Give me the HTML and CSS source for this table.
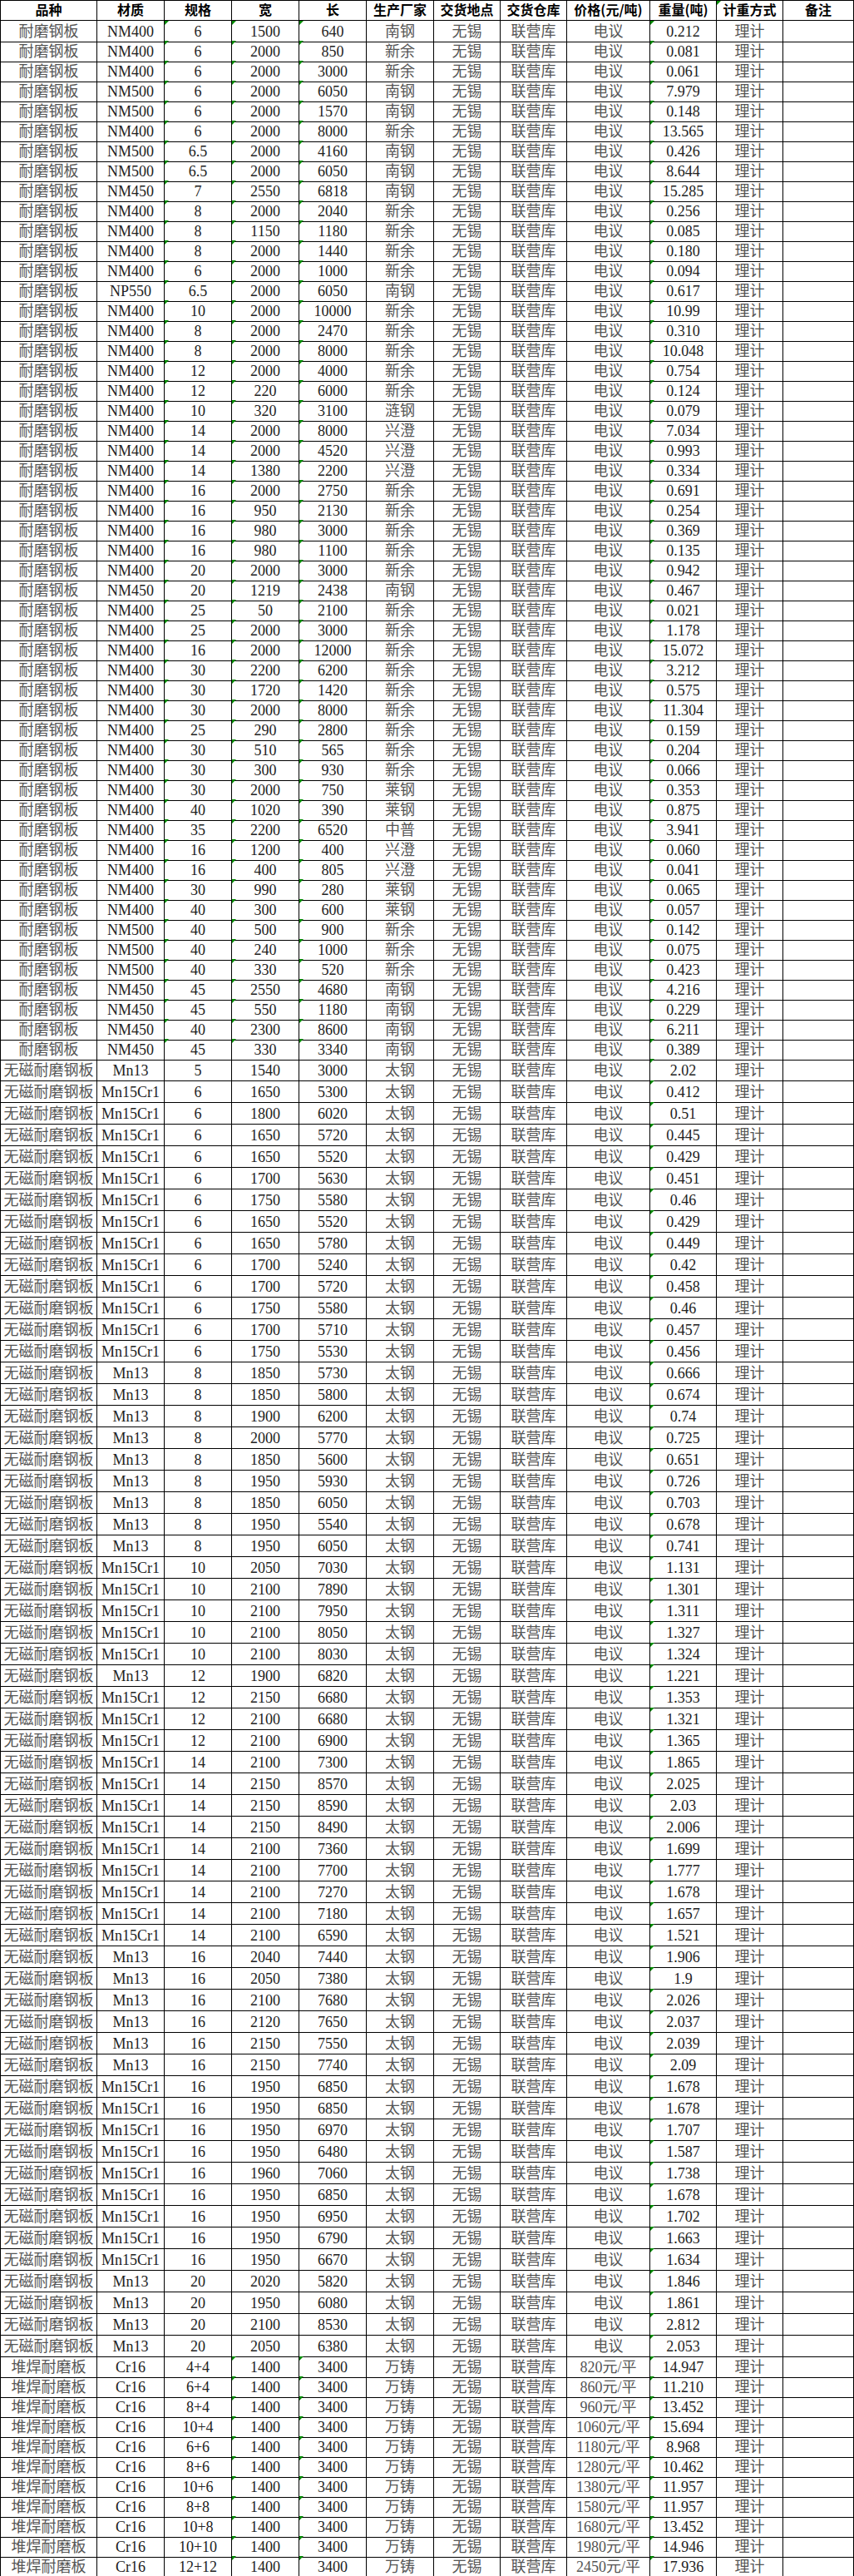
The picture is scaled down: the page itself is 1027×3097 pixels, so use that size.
FILE: index.html
```html
<!DOCTYPE html>
<html lang="zh-CN">
<head>
<meta charset="utf-8">
<title>耐磨钢板库存</title>
<link rel="stylesheet" href="styles.css">
</head>
<body>
<div class="sheet">
  <div class="row head"><span>品种</span><span>材质</span><span>规格</span><span>宽</span><span>长</span><span>生产厂家</span><span>交货地点</span><span>交货仓库</span><span>价格(元/吨)</span><span>重量(吨)</span><span>计重方式</span><span>备注</span></div>
  <div class="group nm">
    <div class="row"><span>耐磨钢板</span><span>NM400</span><span>6</span><span>1500</span><span>640</span><span>南钢</span><span>无锡</span><span>联营库</span><span>电议</span><span>0.212</span><span>理计</span><span></span></div>
    <div class="row"><span>耐磨钢板</span><span>NM400</span><span>6</span><span>2000</span><span>850</span><span>新余</span><span>无锡</span><span>联营库</span><span>电议</span><span>0.081</span><span>理计</span><span></span></div>
    <div class="row"><span>耐磨钢板</span><span>NM400</span><span>6</span><span>2000</span><span>3000</span><span>新余</span><span>无锡</span><span>联营库</span><span>电议</span><span>0.061</span><span>理计</span><span></span></div>
    <div class="row"><span>耐磨钢板</span><span>NM500</span><span>6</span><span>2000</span><span>6050</span><span>南钢</span><span>无锡</span><span>联营库</span><span>电议</span><span>7.979</span><span>理计</span><span></span></div>
    <div class="row"><span>耐磨钢板</span><span>NM500</span><span>6</span><span>2000</span><span>1570</span><span>南钢</span><span>无锡</span><span>联营库</span><span>电议</span><span>0.148</span><span>理计</span><span></span></div>
    <div class="row"><span>耐磨钢板</span><span>NM400</span><span>6</span><span>2000</span><span>8000</span><span>新余</span><span>无锡</span><span>联营库</span><span>电议</span><span>13.565</span><span>理计</span><span></span></div>
    <div class="row"><span>耐磨钢板</span><span>NM500</span><span>6.5</span><span>2000</span><span>4160</span><span>南钢</span><span>无锡</span><span>联营库</span><span>电议</span><span>0.426</span><span>理计</span><span></span></div>
    <div class="row"><span>耐磨钢板</span><span>NM500</span><span>6.5</span><span>2000</span><span>6050</span><span>南钢</span><span>无锡</span><span>联营库</span><span>电议</span><span>8.644</span><span>理计</span><span></span></div>
    <div class="row"><span>耐磨钢板</span><span>NM450</span><span>7</span><span>2550</span><span>6818</span><span>南钢</span><span>无锡</span><span>联营库</span><span>电议</span><span>15.285</span><span>理计</span><span></span></div>
    <div class="row"><span>耐磨钢板</span><span>NM400</span><span>8</span><span>2000</span><span>2040</span><span>新余</span><span>无锡</span><span>联营库</span><span>电议</span><span>0.256</span><span>理计</span><span></span></div>
    <div class="row"><span>耐磨钢板</span><span>NM400</span><span>8</span><span>1150</span><span>1180</span><span>新余</span><span>无锡</span><span>联营库</span><span>电议</span><span>0.085</span><span>理计</span><span></span></div>
    <div class="row"><span>耐磨钢板</span><span>NM400</span><span>8</span><span>2000</span><span>1440</span><span>新余</span><span>无锡</span><span>联营库</span><span>电议</span><span>0.180</span><span>理计</span><span></span></div>
    <div class="row"><span>耐磨钢板</span><span>NM400</span><span>6</span><span>2000</span><span>1000</span><span>新余</span><span>无锡</span><span>联营库</span><span>电议</span><span>0.094</span><span>理计</span><span></span></div>
    <div class="row"><span>耐磨钢板</span><span>NP550</span><span>6.5</span><span>2000</span><span>6050</span><span>南钢</span><span>无锡</span><span>联营库</span><span>电议</span><span>0.617</span><span>理计</span><span></span></div>
    <div class="row"><span>耐磨钢板</span><span>NM400</span><span>10</span><span>2000</span><span>10000</span><span>新余</span><span>无锡</span><span>联营库</span><span>电议</span><span>10.99</span><span>理计</span><span></span></div>
    <div class="row"><span>耐磨钢板</span><span>NM400</span><span>8</span><span>2000</span><span>2470</span><span>新余</span><span>无锡</span><span>联营库</span><span>电议</span><span>0.310</span><span>理计</span><span></span></div>
    <div class="row"><span>耐磨钢板</span><span>NM400</span><span>8</span><span>2000</span><span>8000</span><span>新余</span><span>无锡</span><span>联营库</span><span>电议</span><span>10.048</span><span>理计</span><span></span></div>
    <div class="row"><span>耐磨钢板</span><span>NM400</span><span>12</span><span>2000</span><span>4000</span><span>新余</span><span>无锡</span><span>联营库</span><span>电议</span><span>0.754</span><span>理计</span><span></span></div>
    <div class="row"><span>耐磨钢板</span><span>NM400</span><span>12</span><span>220</span><span>6000</span><span>新余</span><span>无锡</span><span>联营库</span><span>电议</span><span>0.124</span><span>理计</span><span></span></div>
    <div class="row"><span>耐磨钢板</span><span>NM400</span><span>10</span><span>320</span><span>3100</span><span>涟钢</span><span>无锡</span><span>联营库</span><span>电议</span><span>0.079</span><span>理计</span><span></span></div>
    <div class="row"><span>耐磨钢板</span><span>NM400</span><span>14</span><span>2000</span><span>8000</span><span>兴澄</span><span>无锡</span><span>联营库</span><span>电议</span><span>7.034</span><span>理计</span><span></span></div>
    <div class="row"><span>耐磨钢板</span><span>NM400</span><span>14</span><span>2000</span><span>4520</span><span>兴澄</span><span>无锡</span><span>联营库</span><span>电议</span><span>0.993</span><span>理计</span><span></span></div>
    <div class="row"><span>耐磨钢板</span><span>NM400</span><span>14</span><span>1380</span><span>2200</span><span>兴澄</span><span>无锡</span><span>联营库</span><span>电议</span><span>0.334</span><span>理计</span><span></span></div>
    <div class="row"><span>耐磨钢板</span><span>NM400</span><span>16</span><span>2000</span><span>2750</span><span>新余</span><span>无锡</span><span>联营库</span><span>电议</span><span>0.691</span><span>理计</span><span></span></div>
    <div class="row"><span>耐磨钢板</span><span>NM400</span><span>16</span><span>950</span><span>2130</span><span>新余</span><span>无锡</span><span>联营库</span><span>电议</span><span>0.254</span><span>理计</span><span></span></div>
    <div class="row"><span>耐磨钢板</span><span>NM400</span><span>16</span><span>980</span><span>3000</span><span>新余</span><span>无锡</span><span>联营库</span><span>电议</span><span>0.369</span><span>理计</span><span></span></div>
    <div class="row"><span>耐磨钢板</span><span>NM400</span><span>16</span><span>980</span><span>1100</span><span>新余</span><span>无锡</span><span>联营库</span><span>电议</span><span>0.135</span><span>理计</span><span></span></div>
    <div class="row"><span>耐磨钢板</span><span>NM400</span><span>20</span><span>2000</span><span>3000</span><span>新余</span><span>无锡</span><span>联营库</span><span>电议</span><span>0.942</span><span>理计</span><span></span></div>
    <div class="row"><span>耐磨钢板</span><span>NM450</span><span>20</span><span>1219</span><span>2438</span><span>南钢</span><span>无锡</span><span>联营库</span><span>电议</span><span>0.467</span><span>理计</span><span></span></div>
    <div class="row"><span>耐磨钢板</span><span>NM400</span><span>25</span><span>50</span><span>2100</span><span>新余</span><span>无锡</span><span>联营库</span><span>电议</span><span>0.021</span><span>理计</span><span></span></div>
    <div class="row"><span>耐磨钢板</span><span>NM400</span><span>25</span><span>2000</span><span>3000</span><span>新余</span><span>无锡</span><span>联营库</span><span>电议</span><span>1.178</span><span>理计</span><span></span></div>
    <div class="row"><span>耐磨钢板</span><span>NM400</span><span>16</span><span>2000</span><span>12000</span><span>新余</span><span>无锡</span><span>联营库</span><span>电议</span><span>15.072</span><span>理计</span><span></span></div>
    <div class="row"><span>耐磨钢板</span><span>NM400</span><span>30</span><span>2200</span><span>6200</span><span>新余</span><span>无锡</span><span>联营库</span><span>电议</span><span>3.212</span><span>理计</span><span></span></div>
    <div class="row"><span>耐磨钢板</span><span>NM400</span><span>30</span><span>1720</span><span>1420</span><span>新余</span><span>无锡</span><span>联营库</span><span>电议</span><span>0.575</span><span>理计</span><span></span></div>
    <div class="row"><span>耐磨钢板</span><span>NM400</span><span>30</span><span>2000</span><span>8000</span><span>新余</span><span>无锡</span><span>联营库</span><span>电议</span><span>11.304</span><span>理计</span><span></span></div>
    <div class="row"><span>耐磨钢板</span><span>NM400</span><span>25</span><span>290</span><span>2800</span><span>新余</span><span>无锡</span><span>联营库</span><span>电议</span><span>0.159</span><span>理计</span><span></span></div>
    <div class="row"><span>耐磨钢板</span><span>NM400</span><span>30</span><span>510</span><span>565</span><span>新余</span><span>无锡</span><span>联营库</span><span>电议</span><span>0.204</span><span>理计</span><span></span></div>
    <div class="row"><span>耐磨钢板</span><span>NM400</span><span>30</span><span>300</span><span>930</span><span>新余</span><span>无锡</span><span>联营库</span><span>电议</span><span>0.066</span><span>理计</span><span></span></div>
    <div class="row"><span>耐磨钢板</span><span>NM400</span><span>30</span><span>2000</span><span>750</span><span>莱钢</span><span>无锡</span><span>联营库</span><span>电议</span><span>0.353</span><span>理计</span><span></span></div>
    <div class="row"><span>耐磨钢板</span><span>NM400</span><span>40</span><span>1020</span><span>390</span><span>莱钢</span><span>无锡</span><span>联营库</span><span>电议</span><span>0.875</span><span>理计</span><span></span></div>
    <div class="row"><span>耐磨钢板</span><span>NM400</span><span>35</span><span>2200</span><span>6520</span><span>中普</span><span>无锡</span><span>联营库</span><span>电议</span><span>3.941</span><span>理计</span><span></span></div>
    <div class="row"><span>耐磨钢板</span><span>NM400</span><span>16</span><span>1200</span><span>400</span><span>兴澄</span><span>无锡</span><span>联营库</span><span>电议</span><span>0.060</span><span>理计</span><span></span></div>
    <div class="row"><span>耐磨钢板</span><span>NM400</span><span>16</span><span>400</span><span>805</span><span>兴澄</span><span>无锡</span><span>联营库</span><span>电议</span><span>0.041</span><span>理计</span><span></span></div>
    <div class="row"><span>耐磨钢板</span><span>NM400</span><span>30</span><span>990</span><span>280</span><span>莱钢</span><span>无锡</span><span>联营库</span><span>电议</span><span>0.065</span><span>理计</span><span></span></div>
    <div class="row"><span>耐磨钢板</span><span>NM400</span><span>40</span><span>300</span><span>600</span><span>莱钢</span><span>无锡</span><span>联营库</span><span>电议</span><span>0.057</span><span>理计</span><span></span></div>
    <div class="row"><span>耐磨钢板</span><span>NM500</span><span>40</span><span>500</span><span>900</span><span>新余</span><span>无锡</span><span>联营库</span><span>电议</span><span>0.142</span><span>理计</span><span></span></div>
    <div class="row"><span>耐磨钢板</span><span>NM500</span><span>40</span><span>240</span><span>1000</span><span>新余</span><span>无锡</span><span>联营库</span><span>电议</span><span>0.075</span><span>理计</span><span></span></div>
    <div class="row"><span>耐磨钢板</span><span>NM500</span><span>40</span><span>330</span><span>520</span><span>新余</span><span>无锡</span><span>联营库</span><span>电议</span><span>0.423</span><span>理计</span><span></span></div>
    <div class="row"><span>耐磨钢板</span><span>NM450</span><span>45</span><span>2550</span><span>4680</span><span>南钢</span><span>无锡</span><span>联营库</span><span>电议</span><span>4.216</span><span>理计</span><span></span></div>
    <div class="row"><span>耐磨钢板</span><span>NM450</span><span>45</span><span>550</span><span>1180</span><span>南钢</span><span>无锡</span><span>联营库</span><span>电议</span><span>0.229</span><span>理计</span><span></span></div>
    <div class="row"><span>耐磨钢板</span><span>NM450</span><span>40</span><span>2300</span><span>8600</span><span>南钢</span><span>无锡</span><span>联营库</span><span>电议</span><span>6.211</span><span>理计</span><span></span></div>
    <div class="row"><span>耐磨钢板</span><span>NM450</span><span>45</span><span>330</span><span>3340</span><span>南钢</span><span>无锡</span><span>联营库</span><span>电议</span><span>0.389</span><span>理计</span><span></span></div>
  </div>
  <div class="group nonmag">
    <div class="row"><span>无磁耐磨钢板</span><span>Mn13</span><span>5</span><span>1540</span><span>3000</span><span>太钢</span><span>无锡</span><span>联营库</span><span>电议</span><span>2.02</span><span>理计</span><span></span></div>
    <div class="row"><span>无磁耐磨钢板</span><span>Mn15Cr1</span><span>6</span><span>1650</span><span>5300</span><span>太钢</span><span>无锡</span><span>联营库</span><span>电议</span><span>0.412</span><span>理计</span><span></span></div>
    <div class="row"><span>无磁耐磨钢板</span><span>Mn15Cr1</span><span>6</span><span>1800</span><span>6020</span><span>太钢</span><span>无锡</span><span>联营库</span><span>电议</span><span>0.51</span><span>理计</span><span></span></div>
    <div class="row"><span>无磁耐磨钢板</span><span>Mn15Cr1</span><span>6</span><span>1650</span><span>5720</span><span>太钢</span><span>无锡</span><span>联营库</span><span>电议</span><span>0.445</span><span>理计</span><span></span></div>
    <div class="row"><span>无磁耐磨钢板</span><span>Mn15Cr1</span><span>6</span><span>1650</span><span>5520</span><span>太钢</span><span>无锡</span><span>联营库</span><span>电议</span><span>0.429</span><span>理计</span><span></span></div>
    <div class="row"><span>无磁耐磨钢板</span><span>Mn15Cr1</span><span>6</span><span>1700</span><span>5630</span><span>太钢</span><span>无锡</span><span>联营库</span><span>电议</span><span>0.451</span><span>理计</span><span></span></div>
    <div class="row"><span>无磁耐磨钢板</span><span>Mn15Cr1</span><span>6</span><span>1750</span><span>5580</span><span>太钢</span><span>无锡</span><span>联营库</span><span>电议</span><span>0.46</span><span>理计</span><span></span></div>
    <div class="row"><span>无磁耐磨钢板</span><span>Mn15Cr1</span><span>6</span><span>1650</span><span>5520</span><span>太钢</span><span>无锡</span><span>联营库</span><span>电议</span><span>0.429</span><span>理计</span><span></span></div>
    <div class="row"><span>无磁耐磨钢板</span><span>Mn15Cr1</span><span>6</span><span>1650</span><span>5780</span><span>太钢</span><span>无锡</span><span>联营库</span><span>电议</span><span>0.449</span><span>理计</span><span></span></div>
    <div class="row"><span>无磁耐磨钢板</span><span>Mn15Cr1</span><span>6</span><span>1700</span><span>5240</span><span>太钢</span><span>无锡</span><span>联营库</span><span>电议</span><span>0.42</span><span>理计</span><span></span></div>
    <div class="row"><span>无磁耐磨钢板</span><span>Mn15Cr1</span><span>6</span><span>1700</span><span>5720</span><span>太钢</span><span>无锡</span><span>联营库</span><span>电议</span><span>0.458</span><span>理计</span><span></span></div>
    <div class="row"><span>无磁耐磨钢板</span><span>Mn15Cr1</span><span>6</span><span>1750</span><span>5580</span><span>太钢</span><span>无锡</span><span>联营库</span><span>电议</span><span>0.46</span><span>理计</span><span></span></div>
    <div class="row"><span>无磁耐磨钢板</span><span>Mn15Cr1</span><span>6</span><span>1700</span><span>5710</span><span>太钢</span><span>无锡</span><span>联营库</span><span>电议</span><span>0.457</span><span>理计</span><span></span></div>
    <div class="row"><span>无磁耐磨钢板</span><span>Mn15Cr1</span><span>6</span><span>1750</span><span>5530</span><span>太钢</span><span>无锡</span><span>联营库</span><span>电议</span><span>0.456</span><span>理计</span><span></span></div>
    <div class="row"><span>无磁耐磨钢板</span><span>Mn13</span><span>8</span><span>1850</span><span>5730</span><span>太钢</span><span>无锡</span><span>联营库</span><span>电议</span><span>0.666</span><span>理计</span><span></span></div>
    <div class="row"><span>无磁耐磨钢板</span><span>Mn13</span><span>8</span><span>1850</span><span>5800</span><span>太钢</span><span>无锡</span><span>联营库</span><span>电议</span><span>0.674</span><span>理计</span><span></span></div>
    <div class="row"><span>无磁耐磨钢板</span><span>Mn13</span><span>8</span><span>1900</span><span>6200</span><span>太钢</span><span>无锡</span><span>联营库</span><span>电议</span><span>0.74</span><span>理计</span><span></span></div>
    <div class="row"><span>无磁耐磨钢板</span><span>Mn13</span><span>8</span><span>2000</span><span>5770</span><span>太钢</span><span>无锡</span><span>联营库</span><span>电议</span><span>0.725</span><span>理计</span><span></span></div>
    <div class="row"><span>无磁耐磨钢板</span><span>Mn13</span><span>8</span><span>1850</span><span>5600</span><span>太钢</span><span>无锡</span><span>联营库</span><span>电议</span><span>0.651</span><span>理计</span><span></span></div>
    <div class="row"><span>无磁耐磨钢板</span><span>Mn13</span><span>8</span><span>1950</span><span>5930</span><span>太钢</span><span>无锡</span><span>联营库</span><span>电议</span><span>0.726</span><span>理计</span><span></span></div>
    <div class="row"><span>无磁耐磨钢板</span><span>Mn13</span><span>8</span><span>1850</span><span>6050</span><span>太钢</span><span>无锡</span><span>联营库</span><span>电议</span><span>0.703</span><span>理计</span><span></span></div>
    <div class="row"><span>无磁耐磨钢板</span><span>Mn13</span><span>8</span><span>1950</span><span>5540</span><span>太钢</span><span>无锡</span><span>联营库</span><span>电议</span><span>0.678</span><span>理计</span><span></span></div>
    <div class="row"><span>无磁耐磨钢板</span><span>Mn13</span><span>8</span><span>1950</span><span>6050</span><span>太钢</span><span>无锡</span><span>联营库</span><span>电议</span><span>0.741</span><span>理计</span><span></span></div>
    <div class="row"><span>无磁耐磨钢板</span><span>Mn15Cr1</span><span>10</span><span>2050</span><span>7030</span><span>太钢</span><span>无锡</span><span>联营库</span><span>电议</span><span>1.131</span><span>理计</span><span></span></div>
    <div class="row"><span>无磁耐磨钢板</span><span>Mn15Cr1</span><span>10</span><span>2100</span><span>7890</span><span>太钢</span><span>无锡</span><span>联营库</span><span>电议</span><span>1.301</span><span>理计</span><span></span></div>
    <div class="row"><span>无磁耐磨钢板</span><span>Mn15Cr1</span><span>10</span><span>2100</span><span>7950</span><span>太钢</span><span>无锡</span><span>联营库</span><span>电议</span><span>1.311</span><span>理计</span><span></span></div>
    <div class="row"><span>无磁耐磨钢板</span><span>Mn15Cr1</span><span>10</span><span>2100</span><span>8050</span><span>太钢</span><span>无锡</span><span>联营库</span><span>电议</span><span>1.327</span><span>理计</span><span></span></div>
    <div class="row"><span>无磁耐磨钢板</span><span>Mn15Cr1</span><span>10</span><span>2100</span><span>8030</span><span>太钢</span><span>无锡</span><span>联营库</span><span>电议</span><span>1.324</span><span>理计</span><span></span></div>
    <div class="row"><span>无磁耐磨钢板</span><span>Mn13</span><span>12</span><span>1900</span><span>6820</span><span>太钢</span><span>无锡</span><span>联营库</span><span>电议</span><span>1.221</span><span>理计</span><span></span></div>
    <div class="row"><span>无磁耐磨钢板</span><span>Mn15Cr1</span><span>12</span><span>2150</span><span>6680</span><span>太钢</span><span>无锡</span><span>联营库</span><span>电议</span><span>1.353</span><span>理计</span><span></span></div>
    <div class="row"><span>无磁耐磨钢板</span><span>Mn15Cr1</span><span>12</span><span>2100</span><span>6680</span><span>太钢</span><span>无锡</span><span>联营库</span><span>电议</span><span>1.321</span><span>理计</span><span></span></div>
    <div class="row"><span>无磁耐磨钢板</span><span>Mn15Cr1</span><span>12</span><span>2100</span><span>6900</span><span>太钢</span><span>无锡</span><span>联营库</span><span>电议</span><span>1.365</span><span>理计</span><span></span></div>
    <div class="row"><span>无磁耐磨钢板</span><span>Mn15Cr1</span><span>14</span><span>2100</span><span>7300</span><span>太钢</span><span>无锡</span><span>联营库</span><span>电议</span><span>1.865</span><span>理计</span><span></span></div>
    <div class="row"><span>无磁耐磨钢板</span><span>Mn15Cr1</span><span>14</span><span>2150</span><span>8570</span><span>太钢</span><span>无锡</span><span>联营库</span><span>电议</span><span>2.025</span><span>理计</span><span></span></div>
    <div class="row"><span>无磁耐磨钢板</span><span>Mn15Cr1</span><span>14</span><span>2150</span><span>8590</span><span>太钢</span><span>无锡</span><span>联营库</span><span>电议</span><span>2.03</span><span>理计</span><span></span></div>
    <div class="row"><span>无磁耐磨钢板</span><span>Mn15Cr1</span><span>14</span><span>2150</span><span>8490</span><span>太钢</span><span>无锡</span><span>联营库</span><span>电议</span><span>2.006</span><span>理计</span><span></span></div>
    <div class="row"><span>无磁耐磨钢板</span><span>Mn15Cr1</span><span>14</span><span>2100</span><span>7360</span><span>太钢</span><span>无锡</span><span>联营库</span><span>电议</span><span>1.699</span><span>理计</span><span></span></div>
    <div class="row"><span>无磁耐磨钢板</span><span>Mn15Cr1</span><span>14</span><span>2100</span><span>7700</span><span>太钢</span><span>无锡</span><span>联营库</span><span>电议</span><span>1.777</span><span>理计</span><span></span></div>
    <div class="row"><span>无磁耐磨钢板</span><span>Mn15Cr1</span><span>14</span><span>2100</span><span>7270</span><span>太钢</span><span>无锡</span><span>联营库</span><span>电议</span><span>1.678</span><span>理计</span><span></span></div>
    <div class="row"><span>无磁耐磨钢板</span><span>Mn15Cr1</span><span>14</span><span>2100</span><span>7180</span><span>太钢</span><span>无锡</span><span>联营库</span><span>电议</span><span>1.657</span><span>理计</span><span></span></div>
    <div class="row"><span>无磁耐磨钢板</span><span>Mn15Cr1</span><span>14</span><span>2100</span><span>6590</span><span>太钢</span><span>无锡</span><span>联营库</span><span>电议</span><span>1.521</span><span>理计</span><span></span></div>
    <div class="row"><span>无磁耐磨钢板</span><span>Mn13</span><span>16</span><span>2040</span><span>7440</span><span>太钢</span><span>无锡</span><span>联营库</span><span>电议</span><span>1.906</span><span>理计</span><span></span></div>
    <div class="row"><span>无磁耐磨钢板</span><span>Mn13</span><span>16</span><span>2050</span><span>7380</span><span>太钢</span><span>无锡</span><span>联营库</span><span>电议</span><span>1.9</span><span>理计</span><span></span></div>
    <div class="row"><span>无磁耐磨钢板</span><span>Mn13</span><span>16</span><span>2100</span><span>7680</span><span>太钢</span><span>无锡</span><span>联营库</span><span>电议</span><span>2.026</span><span>理计</span><span></span></div>
    <div class="row"><span>无磁耐磨钢板</span><span>Mn13</span><span>16</span><span>2120</span><span>7650</span><span>太钢</span><span>无锡</span><span>联营库</span><span>电议</span><span>2.037</span><span>理计</span><span></span></div>
    <div class="row"><span>无磁耐磨钢板</span><span>Mn13</span><span>16</span><span>2150</span><span>7550</span><span>太钢</span><span>无锡</span><span>联营库</span><span>电议</span><span>2.039</span><span>理计</span><span></span></div>
    <div class="row"><span>无磁耐磨钢板</span><span>Mn13</span><span>16</span><span>2150</span><span>7740</span><span>太钢</span><span>无锡</span><span>联营库</span><span>电议</span><span>2.09</span><span>理计</span><span></span></div>
    <div class="row"><span>无磁耐磨钢板</span><span>Mn15Cr1</span><span>16</span><span>1950</span><span>6850</span><span>太钢</span><span>无锡</span><span>联营库</span><span>电议</span><span>1.678</span><span>理计</span><span></span></div>
    <div class="row"><span>无磁耐磨钢板</span><span>Mn15Cr1</span><span>16</span><span>1950</span><span>6850</span><span>太钢</span><span>无锡</span><span>联营库</span><span>电议</span><span>1.678</span><span>理计</span><span></span></div>
    <div class="row"><span>无磁耐磨钢板</span><span>Mn15Cr1</span><span>16</span><span>1950</span><span>6970</span><span>太钢</span><span>无锡</span><span>联营库</span><span>电议</span><span>1.707</span><span>理计</span><span></span></div>
    <div class="row"><span>无磁耐磨钢板</span><span>Mn15Cr1</span><span>16</span><span>1950</span><span>6480</span><span>太钢</span><span>无锡</span><span>联营库</span><span>电议</span><span>1.587</span><span>理计</span><span></span></div>
    <div class="row"><span>无磁耐磨钢板</span><span>Mn15Cr1</span><span>16</span><span>1960</span><span>7060</span><span>太钢</span><span>无锡</span><span>联营库</span><span>电议</span><span>1.738</span><span>理计</span><span></span></div>
    <div class="row"><span>无磁耐磨钢板</span><span>Mn15Cr1</span><span>16</span><span>1950</span><span>6850</span><span>太钢</span><span>无锡</span><span>联营库</span><span>电议</span><span>1.678</span><span>理计</span><span></span></div>
    <div class="row"><span>无磁耐磨钢板</span><span>Mn15Cr1</span><span>16</span><span>1950</span><span>6950</span><span>太钢</span><span>无锡</span><span>联营库</span><span>电议</span><span>1.702</span><span>理计</span><span></span></div>
    <div class="row"><span>无磁耐磨钢板</span><span>Mn15Cr1</span><span>16</span><span>1950</span><span>6790</span><span>太钢</span><span>无锡</span><span>联营库</span><span>电议</span><span>1.663</span><span>理计</span><span></span></div>
    <div class="row"><span>无磁耐磨钢板</span><span>Mn15Cr1</span><span>16</span><span>1950</span><span>6670</span><span>太钢</span><span>无锡</span><span>联营库</span><span>电议</span><span>1.634</span><span>理计</span><span></span></div>
    <div class="row"><span>无磁耐磨钢板</span><span>Mn13</span><span>20</span><span>2020</span><span>5820</span><span>太钢</span><span>无锡</span><span>联营库</span><span>电议</span><span>1.846</span><span>理计</span><span></span></div>
    <div class="row"><span>无磁耐磨钢板</span><span>Mn13</span><span>20</span><span>1950</span><span>6080</span><span>太钢</span><span>无锡</span><span>联营库</span><span>电议</span><span>1.861</span><span>理计</span><span></span></div>
    <div class="row"><span>无磁耐磨钢板</span><span>Mn13</span><span>20</span><span>2100</span><span>8530</span><span>太钢</span><span>无锡</span><span>联营库</span><span>电议</span><span>2.812</span><span>理计</span><span></span></div>
    <div class="row"><span>无磁耐磨钢板</span><span>Mn13</span><span>20</span><span>2050</span><span>6380</span><span>太钢</span><span>无锡</span><span>联营库</span><span>电议</span><span>2.053</span><span>理计</span><span></span></div>
  </div>
  <div class="group overlay">
    <div class="row"><span>堆焊耐磨板</span><span>Cr16</span><span>4+4</span><span>1400</span><span>3400</span><span>万铸</span><span>无锡</span><span>联营库</span><span>820元/平</span><span>14.947</span><span>理计</span><span></span></div>
    <div class="row"><span>堆焊耐磨板</span><span>Cr16</span><span>6+4</span><span>1400</span><span>3400</span><span>万铸</span><span>无锡</span><span>联营库</span><span>860元/平</span><span>11.210</span><span>理计</span><span></span></div>
    <div class="row"><span>堆焊耐磨板</span><span>Cr16</span><span>8+4</span><span>1400</span><span>3400</span><span>万铸</span><span>无锡</span><span>联营库</span><span>960元/平</span><span>13.452</span><span>理计</span><span></span></div>
    <div class="row"><span>堆焊耐磨板</span><span>Cr16</span><span>10+4</span><span>1400</span><span>3400</span><span>万铸</span><span>无锡</span><span>联营库</span><span>1060元/平</span><span>15.694</span><span>理计</span><span></span></div>
    <div class="row"><span>堆焊耐磨板</span><span>Cr16</span><span>6+6</span><span>1400</span><span>3400</span><span>万铸</span><span>无锡</span><span>联营库</span><span>1180元/平</span><span>8.968</span><span>理计</span><span></span></div>
    <div class="row"><span>堆焊耐磨板</span><span>Cr16</span><span>8+6</span><span>1400</span><span>3400</span><span>万铸</span><span>无锡</span><span>联营库</span><span>1280元/平</span><span>10.462</span><span>理计</span><span></span></div>
    <div class="row"><span>堆焊耐磨板</span><span>Cr16</span><span>10+6</span><span>1400</span><span>3400</span><span>万铸</span><span>无锡</span><span>联营库</span><span>1380元/平</span><span>11.957</span><span>理计</span><span></span></div>
    <div class="row"><span>堆焊耐磨板</span><span>Cr16</span><span>8+8</span><span>1400</span><span>3400</span><span>万铸</span><span>无锡</span><span>联营库</span><span>1580元/平</span><span>11.957</span><span>理计</span><span></span></div>
    <div class="row"><span>堆焊耐磨板</span><span>Cr16</span><span>10+8</span><span>1400</span><span>3400</span><span>万铸</span><span>无锡</span><span>联营库</span><span>1680元/平</span><span>13.452</span><span>理计</span><span></span></div>
    <div class="row"><span>堆焊耐磨板</span><span>Cr16</span><span>10+10</span><span>1400</span><span>3400</span><span>万铸</span><span>无锡</span><span>联营库</span><span>1980元/平</span><span>14.946</span><span>理计</span><span></span></div>
    <div class="row"><span>堆焊耐磨板</span><span>Cr16</span><span>12+12</span><span>1400</span><span>3400</span><span>万铸</span><span>无锡</span><span>联营库</span><span>2450元/平</span><span>17.936</span><span>理计</span><span></span></div>
  </div>
</div>
</body>
</html>
```
FILE: styles.css
```css
* {
  box-sizing: border-box;
}

html, body {
  margin: 0;
  padding: 0;
  background: #ffffff;
}

.sheet {
  width: 1027px;
  border-left: 1px solid #000000;
  border-top: 1px solid #000000;
}

.row {
  display: grid;
  grid-template-columns: 116px 81px 81px 81px 81px 81px 80px 80px 100px 80px 80px 85px;
  height: 24px;
}

.row > span {
  position: relative;
  display: block;
  border-right: 1px solid #000000;
  border-bottom: 1px solid #000000;
  text-align: center;
  white-space: nowrap;
  padding-top: 2px;
  font-family: "Liberation Serif", "Noto Sans CJK SC", serif;
  font-size: 18px;
  line-height: 23px;
  color: #222222;
}

/* columns holding Chinese text */
.row > span:nth-child(1),
.row > span:nth-child(6),
.row > span:nth-child(7),
.row > span:nth-child(8),
.row > span:nth-child(9),
.row > span:nth-child(11) {
  color: #555555;
}

.head > span,
.head > span:nth-child(n) {
  padding-top: 0;
  font-family: "Noto Sans CJK SC", sans-serif;
  font-weight: 700;
  font-size: 16px;
  line-height: 21px;
  color: #000000;
}

.nonmag .row {
  height: 26px;
}

.nonmag .row > span {
  padding-top: 3px;
}

/* Excel "number stored as text" corner markers */
.head > span:nth-child(11)::before,
.nm .row > span:nth-child(3)::before,
.nm .row > span:nth-child(4)::before,
.nm .row > span:nth-child(5)::before,
.nm .row > span:nth-child(10)::before,
.nonmag .row > span:nth-child(10)::before,
.overlay .row > span:nth-child(4)::before,
.overlay .row > span:nth-child(5)::before,
.overlay .row > span:nth-child(10)::before {
  content: "";
  position: absolute;
  left: 0;
  top: 0;
  width: 0;
  height: 0;
  border-top: 5px solid #008a00;
  border-right: 5px solid transparent;
}
```
